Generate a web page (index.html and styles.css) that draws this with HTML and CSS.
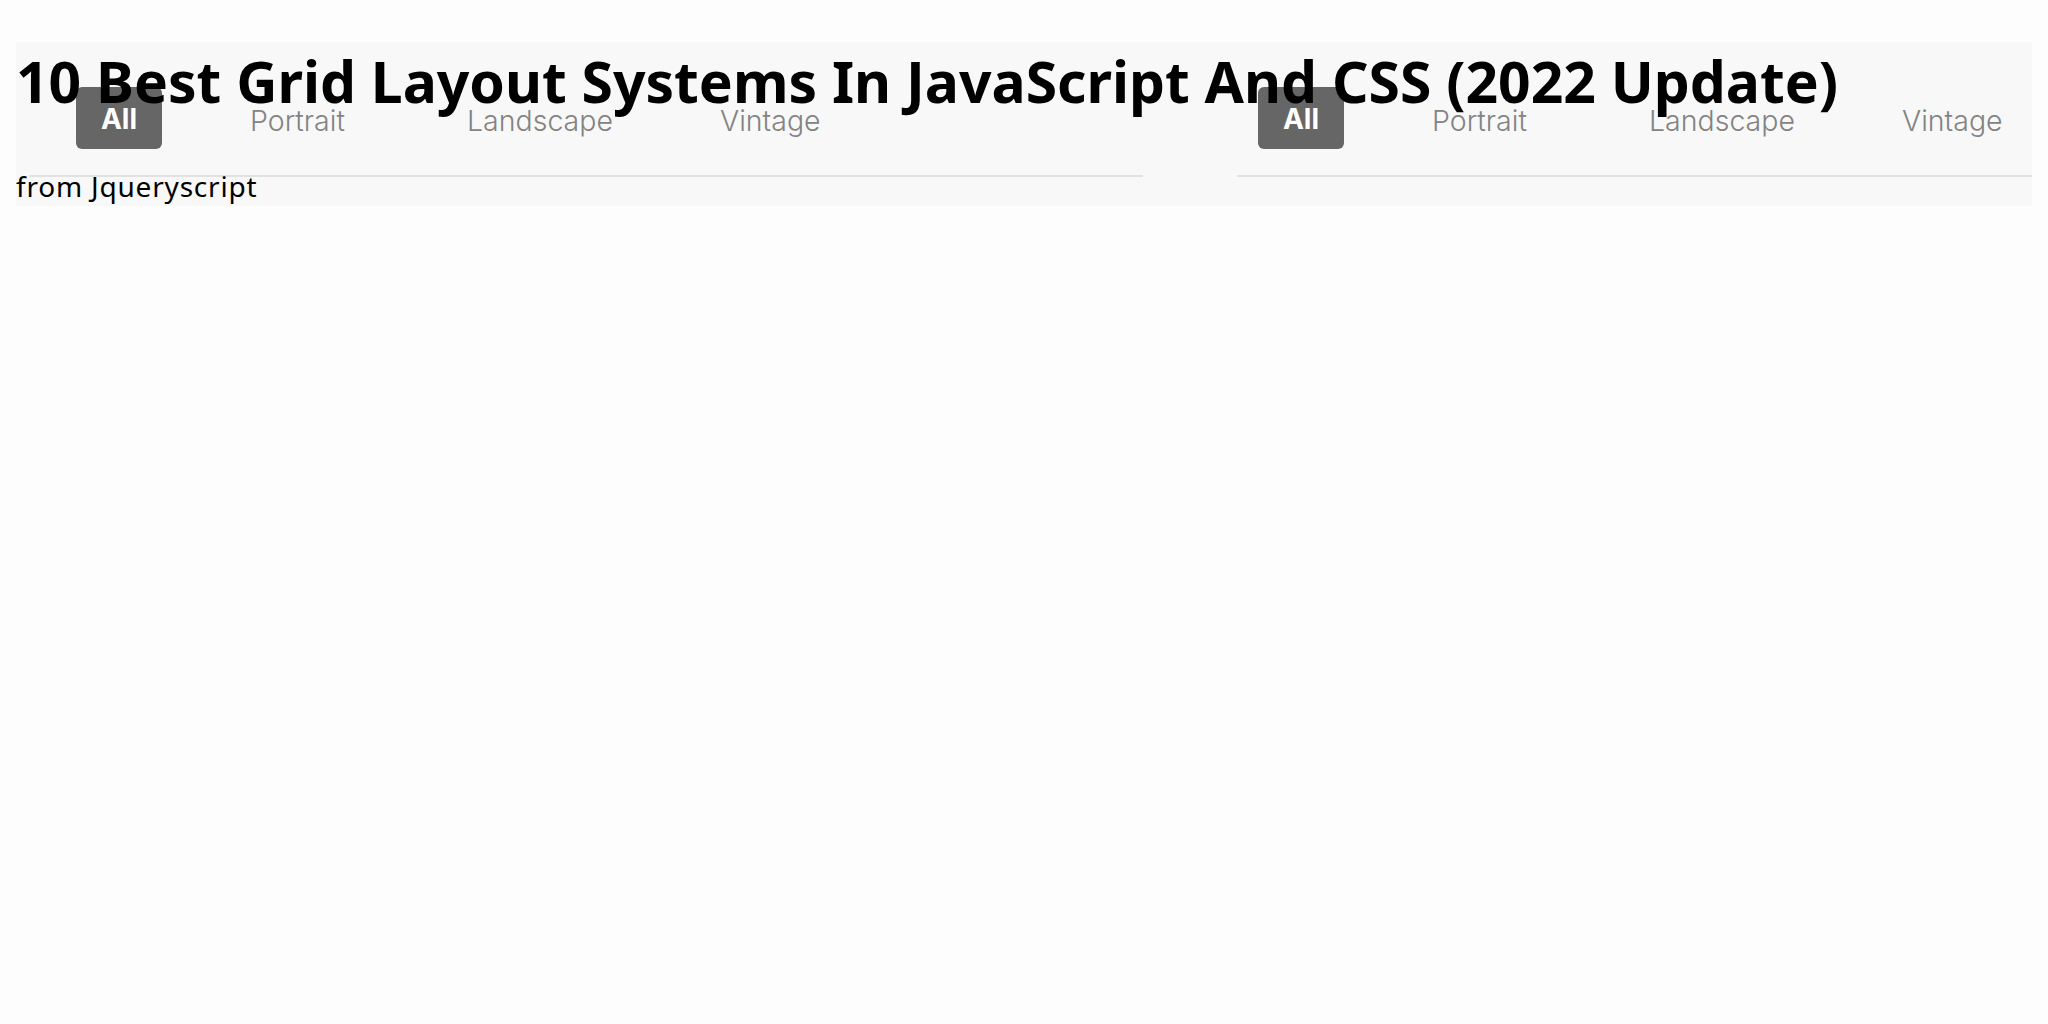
FILE: index.html
```html
<!DOCTYPE html>
<html lang="en">
<head>
<meta charset="utf-8">
<title>10 Best Grid Layout Systems In JavaScript And CSS (2022 Update)</title>
<link rel="stylesheet" href="styles.css">
</head>
<body>
<header class="hero">
  <div class="backdrop" aria-hidden="true">
    <div class="panel panel-left">
      <div class="tabs">
        <span class="tab tab-all">All</span>
        <span class="tab tab-portrait">Portrait</span>
        <span class="tab tab-landscape">Landscape</span>
        <span class="tab">Vintage</span>
      </div>
      <div class="rule"></div>
    </div>
    <div class="panel panel-right">
      <div class="tabs">
        <span class="tab tab-all">All</span>
        <span class="tab tab-portrait">Portrait</span>
        <span class="tab tab-landscape">Landscape</span>
        <span class="tab">Vintage</span>
      </div>
      <div class="rule"></div>
    </div>
  </div>
  <h1 class="title">10 Best Grid Layout Systems In JavaScript And CSS (2022 Update)</h1>
  <p class="source">from Jqueryscript</p>
</header>
</body>
</html>
```
FILE: styles.css
```css
html, body {
  margin: 0;
  padding: 0;
  background: #fdfdfd;
}

body {
  font-family: "Noto Sans", sans-serif;
  color: #000;
}

.hero {
  position: relative;
  box-sizing: border-box;
  margin: 42px 16px 0;
  padding-top: 10px;
  height: 164px;
}

.backdrop {
  position: absolute;
  inset: 0;
  background: #f8f8f8;
  display: flex;
  overflow: hidden;
}

.panel {
  display: flex;
  flex-direction: column;
}

.panel-left {
  width: 1114px;
  margin-left: 13px;
}

.panel-right {
  flex: 1;
  margin-left: 94px;
}

.tabs {
  display: flex;
  align-items: center;
  height: 62px;
  margin-top: 45px;
  font-family: "Inter", sans-serif;
  font-weight: 300;
  font-size: 28.5px;
  color: #838383;
  white-space: nowrap;
}

.panel-left .tabs {
  padding-left: 47px;
}

.panel-right .tabs {
  padding-left: 21px;
}

.tab {
  display: block;
  line-height: 62px;
  padding-top: 6px;
}

.tab-all {
  width: 86px;
  height: 62px;
  padding-top: 3px;
  line-height: 59px;
  margin-right: 88px;
  background: #666;
  border-radius: 6px;
  color: #fff;
  font-weight: 700;
  font-size: 28px;
  text-align: center;
  box-sizing: border-box;
}

.tab-portrait {
  width: 217px;
}

.tab-landscape {
  width: 253px;
}

.rule {
  height: 2px;
  margin-top: 26px;
  background: #e2e2e2;
}

.title {
  position: relative;
  margin: 0;
  font-family: "Noto Sans", sans-serif;
  font-weight: 700;
  font-size: 57px;
  line-height: 58px;
  letter-spacing: 0;
  white-space: nowrap;
}

.source {
  position: relative;
  margin: 58px 0 0;
  font-family: "Noto Sans", sans-serif;
  font-size: 28px;
  line-height: 37px;
  letter-spacing: 0.8px;
}
```
